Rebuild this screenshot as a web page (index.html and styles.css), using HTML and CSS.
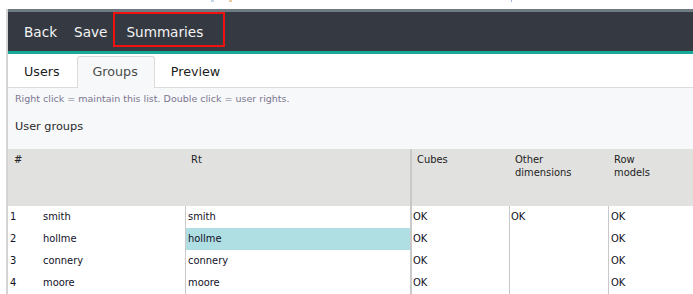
FILE: index.html
```html
<!DOCTYPE html>
<html>
<head>
<meta charset="utf-8">
<link rel="stylesheet" href="styles.css">
</head>
<body>
<div class="top">
  <span class="frag frag-a"></span><span class="frag frag-b"></span><span class="frag frag-c"></span>
</div>
<div class="frame">
  <nav class="toolbar">
    <span class="btn btn-back">Back</span>
    <span class="btn btn-save">Save</span>
    <span class="btn btn-sum">Summaries</span>
  </nav>
  <div class="tabs">
    <span class="tab">Users</span>
    <span class="tab active">Groups</span>
    <span class="tab">Preview</span>
  </div>
  <div class="panel">
    <div class="hint">Right click = maintain this list. Double click = user rights.</div>
    <div class="title">User groups</div>
  </div>
  <div class="grid">
    <div class="h h-num">#</div>
    <div class="h h-rt">Rt</div>
    <div class="h h-cubes">Cubes</div>
    <div class="h">Other<br>dimensions</div>
    <div class="h">Row<br>models</div>

    <div class="c c-num">1</div><div class="c c-name">smith</div><div class="c c-rt">smith</div><div class="c c-cubes">OK</div><div class="c c-other">OK</div><div class="c c-row">OK</div>
    <div class="c c-num">2</div><div class="c c-name">hollme</div><div class="c c-rt sel">hollme</div><div class="c c-cubes">OK</div><div class="c c-other"></div><div class="c c-row">OK</div>
    <div class="c c-num">3</div><div class="c c-name">connery</div><div class="c c-rt">connery</div><div class="c c-cubes">OK</div><div class="c c-other"></div><div class="c c-row">OK</div>
    <div class="c c-num">4</div><div class="c c-name">moore</div><div class="c c-rt">moore</div><div class="c c-cubes">OK</div><div class="c c-other"></div><div class="c c-row">OK</div>
  </div>
</div>
</body>
</html>
```

FILE: styles.css
```css
html, body {
  margin: 0;
  height: 100%;
  overflow: hidden;
  background: #fff;
}
body {
  font-family: "DejaVu Sans", "Liberation Sans", sans-serif;
}

.top {
  height: 9px;
  display: flex;
  align-items: flex-start;
}
.frag {
  display: block;
  height: 2px;
  width: 3px;
}
.frag-a { margin-left: 211px; background: #c4d6ec; }
.frag-b { margin-left: 15px; background: #eccaa4; width: 3px; }
.frag-c { margin-left: 279px; background: #a3b5df; width: 1px; }

.frame {
  margin-left: 6px;
  border-left: 2px solid #d4d4d4;
  height: calc(100% - 9px);
}

/* toolbar */
.toolbar {
  display: flex;
  align-items: flex-start;
  height: 39px;
  padding-left: 16px;
  background: #353a42;
  border-top: 3px solid #6f7b83;
  border-bottom: 3px solid #17a999;
  color: #f4f4f4;
  font-size: 13.6px;
}
.btn {
  display: block;
  line-height: 16px;
  padding-top: 12px;
}
.btn-save { margin-left: 17px; }
.btn-sum {
  margin-left: 6px;
  box-sizing: border-box;
  height: 35px;
  padding: 10px 20px 0 11px;
  border: 2px solid #f01010;
}

/* tabs */
.tabs {
  display: flex;
  align-items: flex-end;
  height: 33px;
  background: #fff;
  border-bottom: 1px solid #dcdcdc;
  font-size: 12.7px;
}
.tab {
  display: block;
  box-sizing: border-box;
  height: 32px;
  margin-bottom: -1px;
  padding: 7px 16px 0 15px;
  line-height: 16px;
  border: 1px solid transparent;
  border-bottom: none;
  color: #1c1c1c;
}
.tab.active {
  background: #f7f8fa;
  border-color: #dadada;
  border-radius: 3px 3px 0 0;
  color: #4a4a4a;
}

/* panel */
.panel {
  height: 61px;
  box-sizing: border-box;
  padding: 5px 7px 0;
  background: #f7f8fa;
}
.hint {
  font-size: 9.5px;
  line-height: 12px;
  color: #7c7690;
}
.title {
  margin-top: 15px;
  font-size: 11.3px;
  line-height: 14px;
  color: #2a2a2a;
}

/* grid */
.grid {
  display: grid;
  grid-template-columns: 32px 145px 225px 99px 99px 1fr;
  grid-template-rows: 57px repeat(4, 22px);
  font-family: "DejaVu Sans Condensed", "DejaVu Sans", sans-serif;
  font-stretch: condensed;
  font-size: 11px;
}
.h {
  background: #e1e1df;
  padding: 4px 6px 0;
  line-height: 13px;
  color: #222;
}
.h-num { grid-column: span 2; }
.h-cubes { border-left: 2px solid #c9c9c9; padding-left: 5px; }

.c {
  line-height: 22px;
  color: #111126;
  background: #fff;
  white-space: nowrap;
}
.c-num { padding-left: 2px; }
.c-name { padding-left: 3px; }
.c-rt { border-left: 1px solid #c9c9c9; padding-left: 2px; }
.c-cubes { border-left: 2px solid #c9c9c9; padding-left: 1px; }
.c-other { border-left: 1px solid #c9c9c9; padding-left: 1px; }
.c-row { border-left: 1px solid #c9c9c9; padding-left: 2px; }
.sel { background: #b0dfe3; }
```
